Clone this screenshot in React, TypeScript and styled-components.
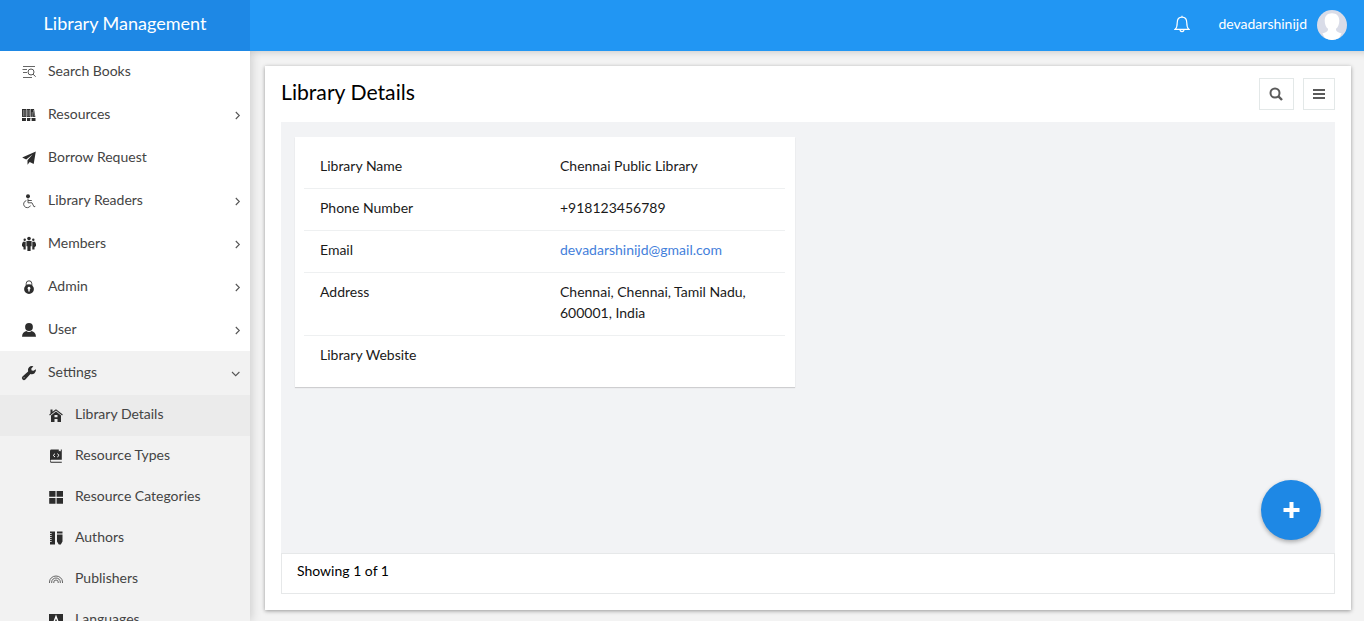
import React from "react";
import styled, { createGlobalStyle } from "styled-components";

const GlobalStyle = createGlobalStyle`
  * { box-sizing: border-box; }
  body {
    margin: 0;
    font-family: Lato, "Liberation Sans", sans-serif;
    font-size: 14px;
    line-height: 21px;
    color: #111;
    background: #f3f3f3;
    overflow: hidden;
  }
`;

const Page = styled.div`
  height: 100vh;
  overflow: hidden;
  display: flex;
  flex-direction: column;
`;

const Header = styled.header`
  height: 51px;
  flex: none;
  display: flex;
  background: #2196f3;
  color: #fff;
  position: relative;
  z-index: 2;
`;

const Brand = styled.div`
  width: 250px;
  height: 51px;
  padding-bottom: 5px;
  display: flex;
  align-items: center;
  justify-content: center;
  background: #1e88e5;
  font-size: 18px;
`;

const Account = styled.div`
  margin-left: auto;
  display: flex;
  align-items: center;
  padding: 0 17px 1px 0;
`;

const Bell = styled.svg`
  width: 16px;
  height: 18px;
  margin-bottom: 2px;
  fill: none;
  stroke: #fff;
  stroke-width: 1.2;
`;

const UserName = styled.span`
  margin: 0 10px 3px 28px;
`;

const Body = styled.div`
  flex: 1;
  min-height: 0;
  display: flex;
`;

const Sidebar = styled.nav`
  width: 250px;
  flex: none;
  overflow: hidden;
  background: #fff;
  color: #444;
  position: relative;
  z-index: 1;
  box-shadow: 1px 0 10px rgba(0, 0, 0, 0.18);
`;

const NavItem = styled.div<{ $first?: boolean; $open?: boolean }>`
  height: ${(p) => (p.$first ? 42 : p.$open ? 44 : 43)}px;
  display: flex;
  align-items: center;
  padding: 0 8px ${(p) => (p.$first || p.$open ? 4 : 2)}px 21px;
  background: ${(p) => (p.$open ? "#f2f2f2" : "transparent")};
`;

const SubMenu = styled.div`
  background: #f2f2f2;
`;

const SubItem = styled.div<{ $active?: boolean }>`
  height: 41px;
  display: flex;
  align-items: center;
  padding: 0 9px 4px 48px;
  background: ${(p) => (p.$active ? "#ebebeb" : "transparent")};
`;

const NavLabel = styled.span`
  margin-left: 11px;
  flex: 1;
`;

const NavIcon = styled.svg`
  width: 16px;
  height: 16px;
  flex: none;
  margin-top: 3px;
  fill: #2d2d2d;
`;

const Chevron = styled.svg`
  width: 9px;
  height: 9px;
  flex: none;
  margin-top: 4px;
  overflow: visible;
  fill: none;
  stroke: #555;
  stroke-width: 1.1;
`;

const Main = styled.main`
  flex: 1;
  padding: 15px 13px 11px 15px;
  box-shadow: inset 0 9px 9px -9px rgba(0, 0, 0, 0.22);
`;

const Panel = styled.section`
  height: 544px;
  padding: 12px 16px 16px;
  display: flex;
  flex-direction: column;
  background: #fff;
  box-shadow: 0 1px 4px rgba(0, 0, 0, 0.38);
`;

const PanelHead = styled.div`
  height: 44px;
  flex: none;
  display: flex;
  align-items: flex-start;
`;

const Title = styled.h1`
  margin: 0;
  flex: 1;
  font-size: 21.2px;
  line-height: 28px;
  font-weight: 400;
  color: #000;
`;

const ToolButton = styled.button<{ $w: number }>`
  width: ${(p) => p.$w}px;
  height: 32px;
  margin-left: 9px;
  padding: 0;
  display: flex;
  align-items: center;
  justify-content: center;
  background: #fff;
  border: 1px solid #e3e8e8;
`;

const Content = styled.div`
  flex: 1;
  position: relative;
  padding: 15px 14px;
  background: #f2f3f5;
`;

const Card = styled.div`
  width: 500px;
  height: 250px;
  padding: 10px 10px 10px 9px;
  background: #fff;
  box-shadow: 0 1px 1px rgba(0, 0, 0, 0.15);
`;

const Row = styled.div`
  display: grid;
  grid-template-columns: 240px 240px;
  padding: 8px 0 12px 1px;
  border-bottom: 1px solid #eef0f1;
  &:last-child { border-bottom: 0; }
`;

const Cell = styled.div<{ $link?: boolean }>`
  padding: 0 15px;
  color: ${(p) => (p.$link ? "#4480db" : "#1a1a1a")};
`;

const Footer = styled.div`
  height: 41px;
  flex: none;
  padding: 6px 15px;
  border: 1px solid #e6e8e9;
  color: #000;
`;

const AddButton = styled.button`
  position: absolute;
  right: 14px;
  bottom: 13px;
  width: 60px;
  height: 60px;
  padding: 0 0 1px;
  border: 0;
  border-radius: 50%;
  display: flex;
  align-items: center;
  justify-content: center;
  background: #1e88e5;
  box-shadow: 0 2px 4px rgba(0, 0, 0, 0.3);
`;

const icons: Record<string, React.ReactNode> = {
  search: (
    <g fill="none" stroke="#555" strokeWidth="1">
      <path d="M2 2.500H14M1.500 5.500H6M2 8.500H6M2 13.500H11" strokeWidth=".9" />
      <circle cx="10" cy="8" r="3" />
      <path d="M12 10.200l2.700 2.500" />
    </g>
  ),
  shelf: (
    <>
      <path d="M1 2h4v8H1zM5.500 2h4v8h-4zM10 2h3l1.400 8H10zM1 11h4v3H1zM6 11h3.500v3H6zM10.500 11h4v3h-4z" />
      <path d="M2.400 3v6M4 3v6M6.800 3v6M8.300 3v6M11.200 5v5M12.400 3l1 6" stroke="#fff" strokeWidth=".4" />
      <path d="M0 10.400h15M5.400 12v2M9.800 12v2" stroke="#fff" strokeWidth=".8" />
    </>
  ),
  plane: <path d="M14.800 1.500 1.200 7.500l4 2L11.500 4.500 6.500 10.200v4.500l2.200-2.700 4 2z" />,
  chair: (
    <>
      <circle cx="7" cy="3.300" r="2" />
      <path d="M7 5.500v4.300h4l2 4 1.300-.5M7 7.500h3.800M5.300 7.600a3.600 3.600 0 1 0 4.200 5" fill="none" stroke="#444" strokeWidth=".9" />
    </>
  ),
  members: (
    <>
      <circle cx="8" cy="2.600" r="1.800" />
      <circle cx="3.700" cy="3.700" r="1.200" />
      <circle cx="12.300" cy="3.700" r="1.200" />
      <path d="M5.400 5h5.200v5.200H9.600V15H6.400v-4.800h-1zM2 5.700h2.700v7.800H2.500v-2.200L1 10V8zM11.300 5.700H14L15 8v2l-1.500 1.300v2.200h-2.200z" />
    </>
  ),
  lock: (
    <>
      <path d="M5.200 7V4.600a2.800 2.800 0 0 1 5.600 0V7" fill="none" stroke="#444" strokeWidth="1" />
      <path fillRule="evenodd" d="M8 5.200a4.900 4.900 0 1 1 0 9.800 4.900 4.900 0 0 1 0-9.800zm0 2.600a1.500 1.500 0 0 0-.7 2.800v2h1.400v-2A1.500 1.500 0 0 0 8 7.800z" />
    </>
  ),
  user: (
    <>
      <ellipse cx="8" cy="5" rx="3.900" ry="4" />
      <path d="M1 14.700c.3-3.500 2-4.800 4.300-5.600 1.600 1.300 3.800 1.300 5.400 0 2.300.8 4 2.100 4.300 5.600z" />
    </>
  ),
  wrench: <path d="M14.900 4.200a4.100 4.100 0 0 1-5.500 4.700l-5 5.500a1.950 1.950 0 0 1-2.900-2.800l5.600-5.100a4.100 4.100 0 0 1 5.300-5.300L10.200 3.800l.5 1.700 1.800.3zM3.100 12.300a.5.500 0 1 0-.1 1 .5.500 0 0 0 .1-1z" />,
  house: (
    <>
      <path d="M2.500 2.600h2v2.200L8 2.200l6.800 5.400-.7.800L8 3.600 1.900 8.400l-.7-.8 1.300-1z" />
      <path fillRule="evenodd" d="M3 8.600l5-4 5 4V15H9.500v-3h-3v3H3zM6.500 8v2.200h3V8z" />
    </>
  ),
  book: (
    <>
      <path d="M3.500 1.500h7.300v2l1-.8 1 .8v-2h1v10.300H3.500a1 1 0 0 0 0 2h10.300v1H3.500c-1.100 0-1.500-.8-1.500-1.600V3c0-.9.500-1.500 1.500-1.500z" />
      <path d="M7 5.700 5.200 7.400 7 9M9.300 5.700l1.800 1.700L9.300 9" fill="none" stroke="#fff" />
    </>
  ),
  grid: <path d="M1.200 2h6.300v5.800H1.200zM8.600 2H15v5.800H8.600zM1.200 8.900h6.300v5.800H1.200zM8.600 8.900H15v5.800H8.600z" />,
  tools: (
    <>
      <path d="M2 1.500h5v13H2zM9 1.500h5.500v2H9zM9 4.500h5.500v7l-1.700 3h-2L9 11.500z" />
      <path d="M2 3.500h1.700M2 5.500h1.700M2 7.500h1.700M2 9.500h1.700M2 11.500h1.700" stroke="#f2f2f2" strokeWidth=".8" />
    </>
  ),
  rainbow: <path d="M1.500 12V11a6.500 6 0 0 1 13 0v1M3.700 12v-1a4.300 4 0 0 1 8.600 0v1M5.800 12v-1a2.200 2 0 0 1 4.400 0v1" fill="none" stroke="#555" strokeWidth=".9" />,
  language: (
    <>
      <path d="M1 2h14v13.500H1z" />
      <path d="M5 12.500 8 4.500l3 8M6.200 9.700h3.600" fill="none" stroke="#fff" strokeWidth="1.400" />
    </>
  ),
};

const Icon = ({ name }: { name: string }) => (
  <NavIcon viewBox="0 0 16 16">{icons[name]}</NavIcon>
);

const navItems = [
  { icon: "search", label: "Search Books" },
  { icon: "shelf", label: "Resources", more: true },
  { icon: "plane", label: "Borrow Request" },
  { icon: "chair", label: "Library Readers", more: true },
  { icon: "members", label: "Members", more: true },
  { icon: "lock", label: "Admin", more: true },
  { icon: "user", label: "User", more: true },
];

const subItems = [
  { icon: "house", label: "Library Details" },
  { icon: "book", label: "Resource Types" },
  { icon: "grid", label: "Resource Categories" },
  { icon: "tools", label: "Authors" },
  { icon: "rainbow", label: "Publishers" },
  { icon: "language", label: "Languages" },
];

const details = [
  { label: "Library Name", value: "Chennai Public Library" },
  { label: "Phone Number", value: "+918123456789" },
  { label: "Email", value: "devadarshinijd@gmail.com", link: true },
  { label: "Address", value: "Chennai, Chennai, Tamil Nadu, 600001, India" },
  { label: "Library Website", value: "" },
];

export default function App() {
  return (
    <Page>
      <GlobalStyle />
      <Header>
        <Brand>Library Management</Brand>
        <Account>
          <Bell viewBox="0 0 16 18">
            <path d="M1.200 14.300c1.600-1.400 2-3 2-6.300 0-3.400 1.700-5.800 4.800-5.800s4.800 2.400 4.800 5.800c0 3.300.4 4.900 2 6.300zM6 14.600c0 2.600 4 2.600 4 0M8 2.200V.8" />
          </Bell>
          <UserName>devadarshinijd</UserName>
          <svg width="30" height="30" viewBox="0 0 30 30">
            <circle cx="15" cy="15" r="15" fill="#d9dce8" />
            <path d="M15 3.200c-4.600 0-7.300 2.800-7.300 7.300 0 4.300 1.300 6.600 3.300 8.300.2 2.500-1.200 3.100-5.600 4.800A15 15 0 0 0 15 30a15 15 0 0 0 9.600-6.400c-4.400-1.700-5.800-2.300-5.600-4.800 2-1.700 3.300-4 3.300-8.300 0-4.500-2.700-7.300-7.300-7.300z" fill="#fff" />
            <path d="M5.400 23.600a15 15 0 0 0 19.200 0L22 28a15 15 0 0 1-14 0z" fill="#fff" />
          </svg>
        </Account>
      </Header>
      <Body>
        <Sidebar>
          {navItems.map((item, i) => (
            <NavItem key={item.label} $first={i === 0}>
              <Icon name={item.icon} />
              <NavLabel>{item.label}</NavLabel>
              {item.more && (
                <Chevron viewBox="0 0 9 9"><path d="M2.800 1 6.300 4.500 2.800 8" /></Chevron>
              )}
            </NavItem>
          ))}
          <NavItem $open>
            <Icon name="wrench" />
            <NavLabel>Settings</NavLabel>
            <Chevron viewBox="0 0 9 9"><path d="M-1 3 2.700 6.700 6.400 3" /></Chevron>
          </NavItem>
          <SubMenu>
            {subItems.map((item, i) => (
              <SubItem key={item.label} $active={i === 0}>
                <Icon name={item.icon} />
                <NavLabel>{item.label}</NavLabel>
              </SubItem>
            ))}
          </SubMenu>
        </Sidebar>
        <Main>
          <Panel>
            <PanelHead>
              <Title>Library Details</Title>
              <ToolButton $w={35} aria-label="Search">
                <svg width="15" height="14" viewBox="0 0 15 14" fill="none" stroke="#5b5b5b" strokeWidth="2">
                  <circle cx="6" cy="6" r="4.500" /><path d="M9.200 9.200l3.800 3.800" strokeWidth="2.400" />
                </svg>
              </ToolButton>
              <ToolButton $w={32} aria-label="Menu">
                <svg width="12" height="12" viewBox="0 0 12 12" fill="#5b5b5b">
                  <path d="M0 1h12v2H0zM0 5h12v2H0zM0 9h12v2H0z" />
                </svg>
              </ToolButton>
            </PanelHead>
            <Content>
              <Card>
                {details.map((d) => (
                  <Row key={d.label}>
                    <Cell>{d.label}</Cell>
                    <Cell $link={d.link}>{d.value}</Cell>
                  </Row>
                ))}
              </Card>
              <AddButton aria-label="Add">
                <svg width="18" height="18" viewBox="0 0 18 18" fill="#fff">
                  <path d="M7.500 1h4v6h6v4h-6v6h-4v-6h-6V7h6z" />
                </svg>
              </AddButton>
            </Content>
            <Footer>Showing 1 of 1</Footer>
          </Panel>
        </Main>
      </Body>
    </Page>
  );
}
